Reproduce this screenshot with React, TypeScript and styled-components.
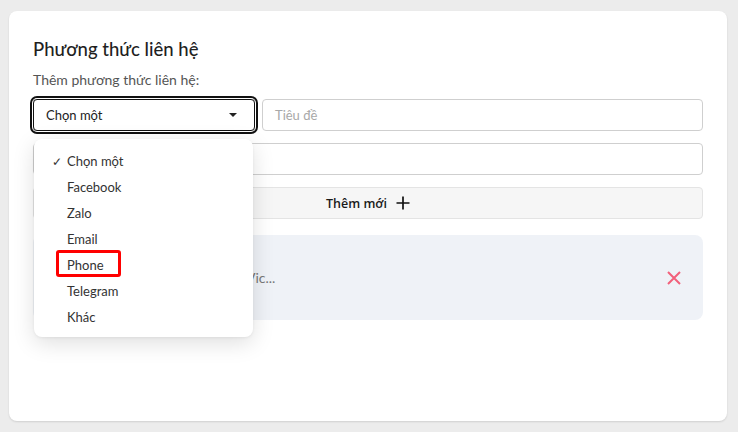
import React from "react";
import styled, { createGlobalStyle } from "styled-components";

const GlobalStyle = createGlobalStyle`
  html, body {
    margin: 0;
    background: #ececec;
    font-family: Lato, "Noto Sans", sans-serif;
  }
  *, *::before, *::after {
    box-sizing: border-box;
  }
`;

const Page = styled.div`
  padding: 11px 11px 11px 9px;
`;

const Card = styled.div`
  height: 410px;
  background: #fff;
  border-radius: 8px;
  box-shadow: 0 1px 2px rgba(0, 0, 0, 0.12);
  padding: 26px 24px 24px 24px;
  display: flex;
  flex-direction: column;
`;

const Title = styled.h2`
  margin: 0;
  font-size: 18.5px;
  line-height: 24px;
  font-weight: 500;
  color: #1f1f1f;
`;

const Label = styled.div`
  margin-top: 9px;
  font-size: 14px;
  line-height: 20px;
  color: #555;
`;

const Row = styled.div`
  margin-top: 9px;
  display: flex;
  gap: 7px;
`;

const SelectWrap = styled.div`
  position: relative;
  width: 222px;
  flex: none;
`;

const SelectBox = styled.div`
  height: 32px;
  border: 1px solid #111;
  border-radius: 4px;
  box-shadow: 0 0 0 1px #fff, 0 0 0 3px #111;
  display: flex;
  align-items: center;
  justify-content: space-between;
  padding: 0 17px 0 12px;
  font-size: 13px;
  color: #222;
`;

const Caret = styled.span`
  width: 0;
  height: 0;
  border-left: 4px solid transparent;
  border-right: 4px solid transparent;
  border-top: 4px solid #222;
`;

const Input = styled.div<{ $placeholder?: boolean }>`
  flex: 1;
  height: 32px;
  border: 1px solid #cfcfcf;
  border-radius: 4px;
  display: flex;
  align-items: center;
  padding: 0 12px;
  font-size: 13px;
  color: ${(p) => (p.$placeholder ? "#a8a8a8" : "#222")};
`;

const FullInput = styled(Input)`
  margin-top: 12px;
  flex: none;
`;

const AddButton = styled.div`
  margin-top: 12px;
  height: 32px;
  background: #f6f6f6;
  border: 1px solid #e4e4e4;
  border-radius: 4px;
  display: flex;
  align-items: center;
  justify-content: center;
  gap: 9px;
  font-family: "Open Sans", "Liberation Sans", sans-serif;
  font-size: 12.5px;
  font-weight: 600;
  color: #1a1a1a;
`;

const ContactItem = styled.div`
  margin-top: 16px;
  height: 85px;
  background: #eff2f7;
  border-radius: 8px;
  display: flex;
  align-items: center;
  justify-content: space-between;
  padding: 0 22px 0 8px;
  font-size: 14px;
  color: #777;
`;

const Menu = styled.ul`
  position: absolute;
  top: 40px;
  left: 1px;
  width: 219px;
  margin: 0;
  padding: 9px 0 7px;
  list-style: none;
  background: #fff;
  border-radius: 8px;
  box-shadow: 0 6px 22px rgba(0, 0, 0, 0.13), 0 1px 3px rgba(0, 0, 0, 0.06);
  z-index: 10;
`;

const MenuItem = styled.li<{ $marked?: boolean }>`
  position: relative;
  height: 26px;
  display: flex;
  align-items: center;
  padding-left: 18px;
  font-size: 13px;
  color: #333;

  &::after {
    content: "";
    display: ${(p) => (p.$marked ? "block" : "none")};
    position: absolute;
    left: 22px;
    top: -2px;
    width: 65px;
    height: 27px;
    border: 3px solid #f00;
    border-radius: 3px;
  }
`;

const Check = styled.span`
  width: 15px;
  flex: none;
  font-size: 12px;
`;

const options = ["Chọn một", "Facebook", "Zalo", "Email", "Phone", "Telegram", "Khác"];

function PlusIcon() {
  return (
    <svg width="14" height="14" viewBox="0 0 14 14">
      <path d="M7 0.5v13M0.5 7h13" stroke="#111" strokeWidth="1.7" />
    </svg>
  );
}

function CloseIcon() {
  return (
    <svg width="14" height="14" viewBox="0 0 14 14">
      <path d="M1 1l12 12M13 1L1 13" stroke="#f2607b" strokeWidth="2" />
    </svg>
  );
}

export default function App() {
  return (
    <Page>
      <GlobalStyle />
      <Card>
        <Title>Phương thức liên hệ</Title>
        <Label>Thêm phương thức liên hệ:</Label>
        <Row>
          <SelectWrap>
            <SelectBox>
              Chọn một
              <Caret />
            </SelectBox>
            <Menu>
              {options.map((o, i) => (
                <MenuItem key={o} $marked={o === "Phone"}>
                  <Check>{i === 0 ? "✓" : ""}</Check>
                  {o}
                </MenuItem>
              ))}
            </Menu>
          </SelectWrap>
          <Input $placeholder>Tiêu đề</Input>
        </Row>
        <FullInput />
        <AddButton>
          Thêm mới
          <PlusIcon />
        </AddButton>
        <ContactItem>
          <span>Zalo: Công ty TNHH Thương mại Vic...</span>
          <CloseIcon />
        </ContactItem>
      </Card>
    </Page>
  );
}
